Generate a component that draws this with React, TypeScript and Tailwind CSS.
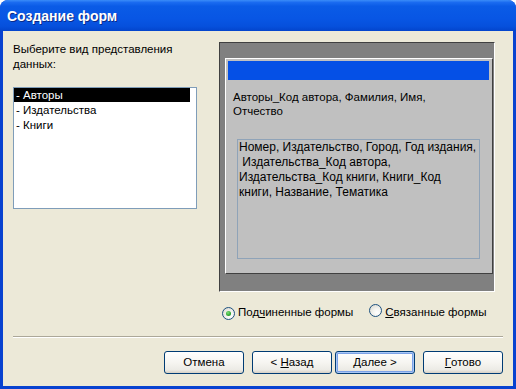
import React from "react";

const font = { fontFamily: '"Liberation Sans", Arial, sans-serif' };

function Radio({ checked }: { checked?: boolean }) {
  return (
    <span className="relative inline-flex h-[13px] w-[13px] items-center justify-center rounded-full border border-[#1c5180] bg-[radial-gradient(circle_at_65%_70%,#ffffff_0%,#f3f3ef_40%,#d6d3c9_100%)]">
      {checked && (
        <span className="h-[5px] w-[5px] rounded-full bg-[radial-gradient(circle_at_40%_35%,#7ee07e_0%,#2fa52f_60%,#1b7d1b_100%)]" />
      )}
    </span>
  );
}

function Btn({ children, focused }: { children: React.ReactNode; focused?: boolean }) {
  return (
    <div
      className={
        "flex h-[23px] w-[80px] items-center justify-center rounded-[3px] border border-[#003c74] bg-[linear-gradient(to_bottom,#ffffff_0%,#f6f5f1_50%,#ecebe5_85%,#d6d0c5_100%)] text-[11.5px] text-black whitespace-pre " +
        (focused ? "shadow-[inset_0_0_0_1px_#a9c7f5,inset_0_0_0_2px_#7ba2e7]" : "")
      }
    >
      {children}
    </div>
  );
}

export default function App() {
  return (
    <div style={font} className="w-[516px] h-[389px] overflow-hidden">
      <div className="flex h-[389px] w-[516px] flex-col rounded-t-[8px] bg-[#0842d0]">
        {/* Title bar */}
        <div className="flex h-[31px] items-center rounded-t-[8px] bg-[linear-gradient(to_bottom,#3a8cf8_0%,#1a6bf0_8%,#0a5be6_20%,#0856e4_60%,#0650dc_85%,#0344cc_100%)] pl-[7px]">
          <span className="mt-[2px] text-[14px] font-bold text-white [text-shadow:1px_1px_0_#0a2a88]">
            Создание форм
          </span>
        </div>
        {/* Client */}
        <div className="mx-[3px] mb-[3px] flex flex-1 flex-col bg-[#ece9d8] text-[11.5px] text-black">
          <div className="flex pl-[10px] pt-[11px]">
            {/* Left column */}
            <div className="flex w-[184px] flex-col">
              <div className="leading-[15px]">
                Выберите вид представления
                <br />
                данных:
              </div>
              <div className="mt-[15px] h-[122px] border border-[#7f9db9] bg-white">
                <div className="mr-[6px] h-[14px] bg-black pl-[2px] leading-[14px] text-white">- Авторы</div>
                <div className="h-[15px] pl-[2px] leading-[16px]">- Издательства</div>
                <div className="h-[15px] pl-[2px] leading-[16px]">- Книги</div>
              </div>
            </div>
            {/* Right column */}
            <div className="ml-[22px] flex flex-col">
              <div className="h-[250px] w-[276px] border border-t-[#404040] border-l-[#404040] border-r-white border-b-white bg-[#808080] pb-[17px] pl-[5px] pr-[1px] pt-[15px]">
                <div className="flex h-full flex-col border border-t-white border-l-white border-r-[#404040] border-b-[#404040] bg-[#c0c0c0]">
                  <div className="ml-[2px] mr-[3px] mt-[2px] h-[19px] bg-[#0550e6]" />
                  <div className="mt-[10px] pl-[7px] leading-[14px]">
                    Авторы_Код автора, Фамилия, Имя,
                    <br />
                    Отчество
                  </div>
                  <div className="ml-[11px] mt-[21px] h-[120px] w-[243px] border border-[#8fa3b8] pl-[1px] text-[12px] leading-[15px] whitespace-nowrap">
                    Номер, Издательство, Город, Год издания,
                    <br />
                    {"\u00a0Издательства_Код автора,"}
                    <br />
                    Издательства_Код книги, Книги_Код
                    <br />
                    книги, Название, Тематика
                  </div>
                </div>
              </div>
              <div className="ml-[3px] mt-[14px] flex h-[14px] items-center">
                <Radio checked />
                <span className="ml-[3px]">
                  Под<span className="underline">ч</span>иненные формы
                </span>
                <span className="ml-[16px]">
                  <Radio />
                </span>
                <span className="ml-[3px]">
                  <span className="underline">С</span>вязанные формы
                </span>
              </div>
            </div>
          </div>
          {/* Separator */}
          <div className="mx-[10px] mt-[16px] h-[2px] border-t border-t-[#aca899] border-b border-b-white" />
          {/* Buttons */}
          <div className="mt-[13px] flex justify-end pr-[10px]">
            <Btn>Отмена</Btn>
            <div className="ml-[8px]">
              <Btn>
                {"< "}
                <span className="underline">Н</span>азад
              </Btn>
            </div>
            <div className="ml-[3px]">
              <Btn focused>
                <span className="underline">Д</span>
                {"алее >"}
              </Btn>
            </div>
            <div className="ml-[8px]">
              <Btn>
                <span className="underline">Г</span>отово
              </Btn>
            </div>
          </div>
        </div>
      </div>
    </div>
  );
}
